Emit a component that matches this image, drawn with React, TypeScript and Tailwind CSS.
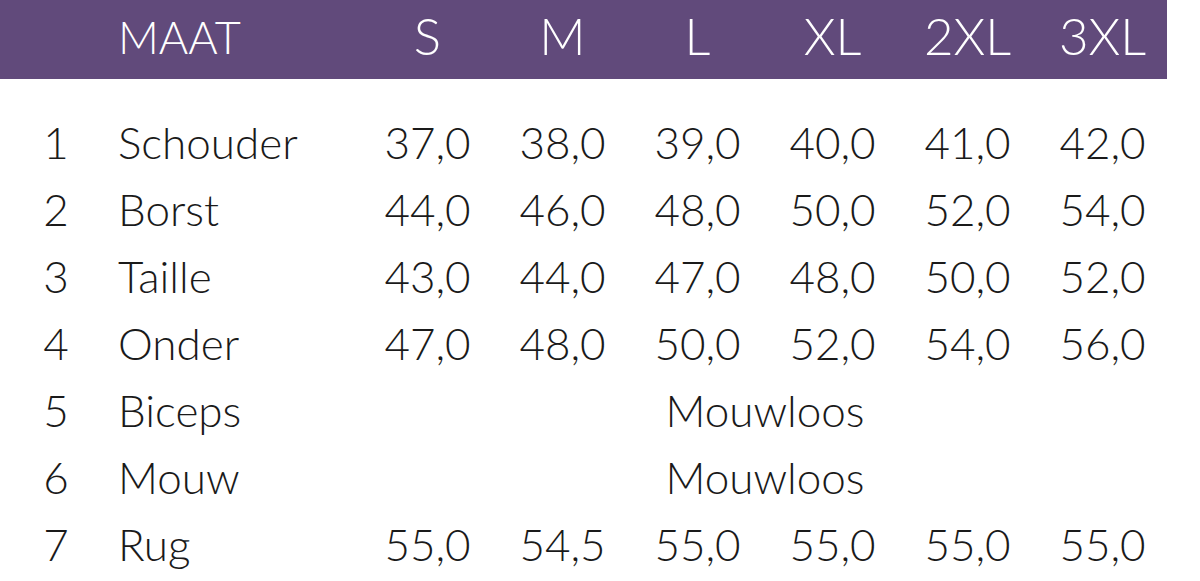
import React from "react";

const sizes = ["S", "M", "L", "XL", "2XL", "3XL"];

type Row = { n: number; label: string; values: string[] | null };

const rows: Row[] = [
  { n: 1, label: "Schouder", values: ["37,0", "38,0", "39,0", "40,0", "41,0", "42,0"] },
  { n: 2, label: "Borst", values: ["44,0", "46,0", "48,0", "50,0", "52,0", "54,0"] },
  { n: 3, label: "Taille", values: ["43,0", "44,0", "47,0", "48,0", "50,0", "52,0"] },
  { n: 4, label: "Onder", values: ["47,0", "48,0", "50,0", "52,0", "54,0", "56,0"] },
  { n: 5, label: "Biceps", values: null },
  { n: 6, label: "Mouw", values: null },
  { n: 7, label: "Rug", values: ["55,0", "54,5", "55,0", "55,0", "55,0", "55,0"] },
];

const grid = "grid grid-cols-[112px_248px_repeat(6,135px)]";

export default function App() {
  return (
    <div className="h-[581px] w-[1200px] overflow-hidden bg-white font-['Lato',sans-serif] font-light leading-[67px] text-[#1a1a1a]">
      <div className={`${grid} h-[79px] w-[1167px] bg-[#614a7b] text-white`}>
        <div />
        <div className="pl-[6px] pt-[4px] text-[45px]">MAAT</div>
        {sizes.map((s) => (
          <div key={s} className="pt-[2px] text-center text-[51px]">
            {s}
          </div>
        ))}
      </div>

      <div className="pt-[30px] text-[44px]">
        {rows.map((row) => (
          <div key={row.n} className={`${grid} h-[67px]`}>
            <div className="text-center">{row.n}</div>
            <div className="pl-[6px]">{row.label}</div>
            {row.values ? (
              row.values.map((v, i) => (
                <div key={i} className="text-center">
                  {v}
                </div>
              ))
            ) : (
              <div className="col-span-6 text-center">Mouwloos</div>
            )}
          </div>
        ))}
      </div>
    </div>
  );
}
